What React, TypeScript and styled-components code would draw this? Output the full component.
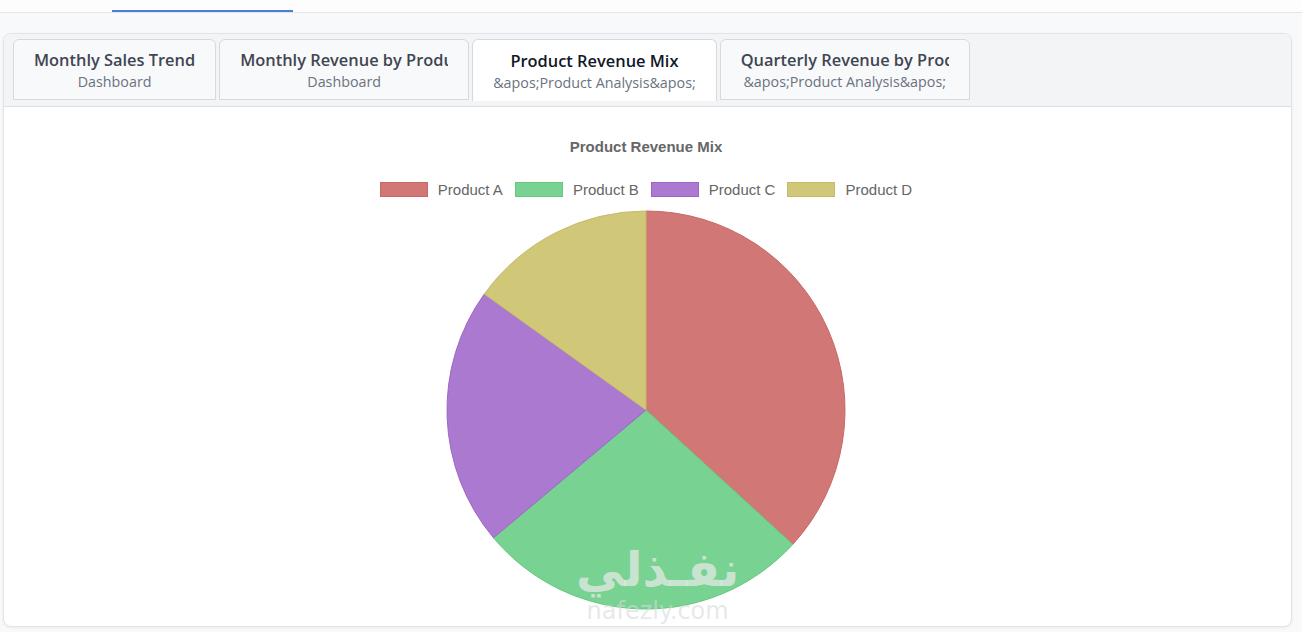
import styled, { createGlobalStyle } from "styled-components";

const GlobalStyle = createGlobalStyle`
  html, body {
    margin: 0;
    padding: 0;
    background: #f8f9fa;
    font-family: "Open Sans", "Noto Sans", Arial, sans-serif;
  }
`;

interface ITab {
  title: string;
  subtitle: string;
}

const tabs: ITab[] = [
  { title: "Monthly Sales Trend", subtitle: "Dashboard" },
  { title: "Monthly Revenue by Product", subtitle: "Dashboard" },
  { title: "Product Revenue Mix", subtitle: "&apos;Product Analysis&apos;" },
  {
    title: "Quarterly Revenue by Product",
    subtitle: "&apos;Product Analysis&apos;",
  },
];

const slices = [
  { label: "Product A", value: 368, fill: "#d17775", stroke: "#c86865" },
  { label: "Product B", value: 271, fill: "#78d292", stroke: "#66c783" },
  { label: "Product C", value: 210, fill: "#ac79d1", stroke: "#9b66c6" },
  { label: "Product D", value: 151, fill: "#d1c778", stroke: "#c6bb66" },
];

const R = 199;
const C = 200;

function point(deg: number) {
  const rad = ((deg - 90) * Math.PI) / 180;
  return [C + R * Math.cos(rad), C + R * Math.sin(rad)];
}

function PieChart() {
  const total = slices.reduce((s, d) => s + d.value, 0);
  let start = 0;
  return (
    <svg width="400" height="400" viewBox="0 0 400 400">
      {slices.map((d) => {
        const sweep = (d.value / total) * 360;
        const [x1, y1] = point(start);
        const [x2, y2] = point(start + sweep);
        const large = sweep > 180 ? 1 : 0;
        start += sweep;
        return (
          <path
            key={d.label}
            d={`M${C},${C} L${x1},${y1} A${R},${R} 0 ${large} 1 ${x2},${y2} Z`}
            fill={d.fill}
            stroke={d.stroke}
            strokeWidth={1}
          />
        );
      })}
    </svg>
  );
}

export default function App() {
  const active = 2;
  return (
    <>
      <GlobalStyle />
      <TopNav>
        <NavIndicator />
      </TopNav>
      <Page>
        <Card>
          <TabBar>
            {tabs.map((t, i) => (
              <Tab key={t.title} $active={i === active}>
                <TabTitle $active={i === active}>{t.title}</TabTitle>
                <TabSubtitle>{t.subtitle}</TabSubtitle>
              </Tab>
            ))}
          </TabBar>
          <ChartBody>
            <ChartTitle>Product Revenue Mix</ChartTitle>
            <Legend>
              {slices.map((d) => (
                <LegendItem key={d.label}>
                  <LegendBox $fill={d.fill} $stroke={d.stroke} />
                  {d.label}
                </LegendItem>
              ))}
            </Legend>
            <PieChart />
            <Watermark>
              <WatermarkArabic>نفـذلي</WatermarkArabic>
              <WatermarkLatin>nafezly.com</WatermarkLatin>
            </Watermark>
          </ChartBody>
        </Card>
      </Page>
    </>
  );
}

const TopNav = styled.div`
  height: 12px;
  background: #fdfdfd;
  border-bottom: 1px solid #e3e5e8;
  display: flex;
  align-items: flex-end;
`;

const NavIndicator = styled.div`
  margin-left: 112px;
  width: 181px;
  height: 2px;
  background: #4a80d0;
`;

const Page = styled.div`
  padding: 20px 10px 4px 3px;
`;

const Card = styled.div`
  background: #fff;
  border: 1px solid #e2e4e8;
  border-radius: 8px;
  box-shadow: 0 1px 3px rgba(0, 0, 0, 0.06);
  overflow: hidden;
  height: 592px;
  display: flex;
  flex-direction: column;
`;

const TabBar = styled.div`
  display: flex;
  gap: 3px;
  align-items: stretch;
  padding: 5px 9px 0;
  height: 67px;
  background: #f3f4f6;
  border-bottom: 1px solid #dcdfe3;
`;

const Tab = styled.div<{ $active: boolean }>`
  flex: 0 0 auto;
  max-width: 250px;
  box-sizing: border-box;
  height: ${(p) => (p.$active ? "62px" : "61px")};
  padding: 1px 20px 0;
  border: 1px solid #d6d9de;
  border-bottom: ${(p) => (p.$active ? "none" : "1px solid #d6d9de")};
  border-radius: 6px 6px 0 0;
  background: ${(p) => (p.$active ? "#ffffff" : "#f8f9fa")};
  display: flex;
  flex-direction: column;
  justify-content: center;
  overflow: hidden;
`;

const TabTitle = styled.div<{ $active: boolean }>`
  font-size: 16.4px;
  font-weight: 600;
  line-height: 22px;
  color: ${(p) => (p.$active ? "#111827" : "#3f4652")};
  white-space: nowrap;
  overflow: hidden;
  text-align: center;
`;

const TabSubtitle = styled.div`
  margin-top: 1px;
  font-size: 14.3px;
  line-height: 20px;
  color: #6b7280;
  white-space: nowrap;
  overflow: hidden;
  text-align: center;
`;

const ChartBody = styled.div`
  position: relative;
  flex: 1;
  display: flex;
  flex-direction: column;
  align-items: center;
  padding: 31px 3px 0 0;
`;

const ChartTitle = styled.div`
  font-family: "Liberation Sans", Arial, sans-serif;
  font-size: 15px;
  font-weight: 700;
  line-height: 18px;
  color: #666;
`;

const Legend = styled.div`
  display: flex;
  gap: 12px;
  margin-top: 25px;
  margin-bottom: 13px;
  font-family: "Liberation Sans", Arial, sans-serif;
  font-size: 15px;
  color: #666;
`;

const LegendItem = styled.div`
  display: flex;
  align-items: center;
  gap: 10px;
  height: 16px;
`;

const LegendBox = styled.span<{ $fill: string; $stroke: string }>`
  width: 48px;
  height: 15px;
  box-sizing: border-box;
  background: ${(p) => p.$fill};
  border: 1px solid ${(p) => p.$stroke};
`;

const Watermark = styled.div`
  position: absolute;
  left: 572px;
  top: 435px;
  display: flex;
  flex-direction: column;
  align-items: center;
  pointer-events: none;
`;

const WatermarkArabic = styled.div`
  font-family: "DejaVu Sans", sans-serif;
  font-weight: 700;
  font-size: 48px;
  line-height: 54px;
  color: rgba(232, 236, 234, 0.72);
`;

const WatermarkLatin = styled.div`
  margin-top: 2px;
  font-family: "DejaVu Sans", sans-serif;
  font-weight: 400;
  font-size: 24px;
  line-height: 26px;
  color: rgba(215, 218, 216, 0.6);
`;
